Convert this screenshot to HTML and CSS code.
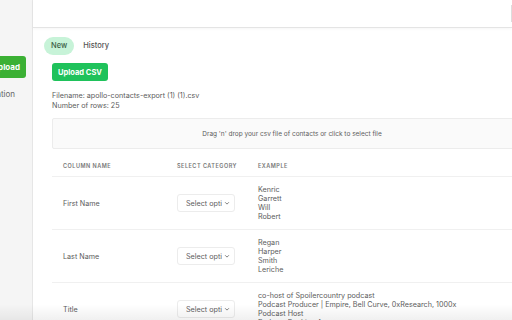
FILE: index.html
```html
<!DOCTYPE html>
<html>
    <head>
        <meta name="viewport" content="width=device-width, initial-scale=1" />
        <link rel="stylesheet" href="styles.css">
    </head>
    <body class="app">
        <aside class="sidebar">
            <div class="sidenav">
                <button class="side-btn">Upload</button>
                <span class="side-link">Integration</span>
            </div>
        </aside>

        <main class="main">
            <header class="topbar">
                <div class="topbar-edge"></div>
            </header>

            <div class="content">
                <nav class="tabs">
                    <span class="tab active">New</span>
                    <span class="tab">History</span>
                </nav>

                <section class="upload">
                    <button class="upload-btn">Upload CSV</button>

                    <div class="fileinfo">
                        <p>Filename: apollo-contacts-export (1) (1).csv</p>
                        <p>Number of rows: 25</p>
                    </div>

                    <div class="dropzone">Drag 'n' drop your csv file of contacts or click to select file</div>

                    <div class="mapping">
                        <div class="row head">
                            <span>Column Name</span>
                            <span>Select Category</span>
                            <span>Example</span>
                        </div>
                        <div class="row">
                            <span class="colname">First Name</span>
                            <span class="pick">
                                <span class="select"><span class="label">Select option</span><svg viewBox="0 0 8 8" width="6" height="6"><path d="M1.5 3l2.5 2.5 2.5-2.5" fill="none" stroke="#555" stroke-width="1"/></svg></span>
                            </span>
                            <span class="examples">Kenric<br>Garrett<br>Will<br>Robert</span>
                        </div>
                        <div class="row">
                            <span class="colname">Last Name</span>
                            <span class="pick">
                                <span class="select"><span class="label">Select option</span><svg viewBox="0 0 8 8" width="6" height="6"><path d="M1.5 3l2.5 2.5 2.5-2.5" fill="none" stroke="#555" stroke-width="1"/></svg></span>
                            </span>
                            <span class="examples">Regan<br>Harper<br>Smith<br>Leriche</span>
                        </div>
                        <div class="row">
                            <span class="colname">Title</span>
                            <span class="pick">
                                <span class="select"><span class="label">Select option</span><svg viewBox="0 0 8 8" width="6" height="6"><path d="M1.5 3l2.5 2.5 2.5-2.5" fill="none" stroke="#555" stroke-width="1"/></svg></span>
                            </span>
                            <span class="examples">co-host of Spoilercountry podcast<br>Podcast Producer | Empire, Bell Curve, 0xResearch, 1000x<br>Podcast Host<br>Podcast Booking Agent</span>
                        </div>
                    </div>
                </section>
            </div>
        </main>

        <div class="fade"></div>
    </body>
</html>
```

FILE: styles.css
```css
* {
    padding: 0;
    margin: 0;
    box-sizing: border-box;
}

body.app {
    display: flex;
    height: 320px;
    overflow: hidden;
    position: relative;
    font-family: Inter, "Noto Sans", sans-serif;
    font-size: 7.2px;
    color: #5c5c5c;
    background: white;
}

aside.sidebar {
    width: 33px;
    flex-shrink: 0;
    background: #f5f5f5;
    border-right: 1px solid #e6e6e6;
    overflow: hidden;
}
div.sidenav {
    width: 120px;
    margin-left: -94px;
    padding-top: 56px;
    display: flex;
    flex-direction: column;
}
button.side-btn {
    height: 22px;
    width: 120px;
    border: none;
    border-radius: 3px;
    background: #3bb034;
    color: white;
    font: 700 8px Inter, sans-serif;
    text-align: right;
    padding-right: 6px;
}
span.side-link {
    margin-top: 11px;
    text-align: right;
    padding-right: 11px;
    font-size: 8px;
    color: #666;
}

main.main {
    flex: 1;
    min-width: 0;
}

header.topbar {
    height: 28px;
    border-bottom: 1px solid #e4e4e4;
    box-shadow: 0 1px 3px rgba(0, 0, 0, 0.04);
    display: flex;
    justify-content: flex-end;
    padding: 5px 0;
}
div.topbar-edge {
    width: 1px;
    background: #ddd;
}

div.content {
    padding: 9px 0 0 11px;
}

nav.tabs {
    display: flex;
    align-items: center;
    gap: 2px;
}
span.tab {
    height: 18px;
    line-height: 18px;
    padding: 0 7px;
    border-radius: 9px;
    font-size: 7.5px;
    font-weight: 500;
    color: #555;
}
span.tab.active {
    background: #c7f3d8;
    color: #3a6047;
}

section.upload {
    padding-left: 8px;
    width: 488px;
}
button.upload-btn {
    margin-top: 8px;
    height: 18px;
    width: 56px;
    border: none;
    border-radius: 3px;
    background: #1fc25b;
    color: white;
    font: 700 7.5px Inter, sans-serif;
}

div.fileinfo {
    margin-top: 10px;
    line-height: 10px;
}

div.dropzone {
    margin-top: 7px;
    height: 31px;
    display: flex;
    justify-content: center;
    align-items: center;
    background: #fafafa;
    border: 1px solid #ececec;
    border-radius: 2px;
    font-size: 6.5px;
}

div.mapping {
    margin-top: 8px;
}
div.row {
    display: grid;
    grid-template-columns: 114px 81px 1fr;
    padding: 8px 0 8px 11px;
    border-bottom: 1px solid #f0f0f0;
    align-items: center;
    line-height: 9px;
}
div.row.head {
    padding: 5px 0 5px 11px;
    font-size: 5.5px;
    font-weight: 600;
    letter-spacing: 0.5px;
    text-transform: uppercase;
    color: #777;
}
span.examples {
    white-space: nowrap;
}
span.select {
    display: flex;
    align-items: center;
    gap: 2px;
    width: 58px;
    height: 18px;
    padding: 0 0 0 8px;
    border: 1px solid #ececec;
    border-radius: 3px;
}
span.label {
    width: 36px;
    overflow: hidden;
    white-space: nowrap;
}

div.fade {
    position: absolute;
    left: 0;
    right: 0;
    bottom: 0;
    height: 16px;
    background: linear-gradient(rgba(0, 0, 0, 0), rgba(0, 0, 0, 0.06));
}
```
